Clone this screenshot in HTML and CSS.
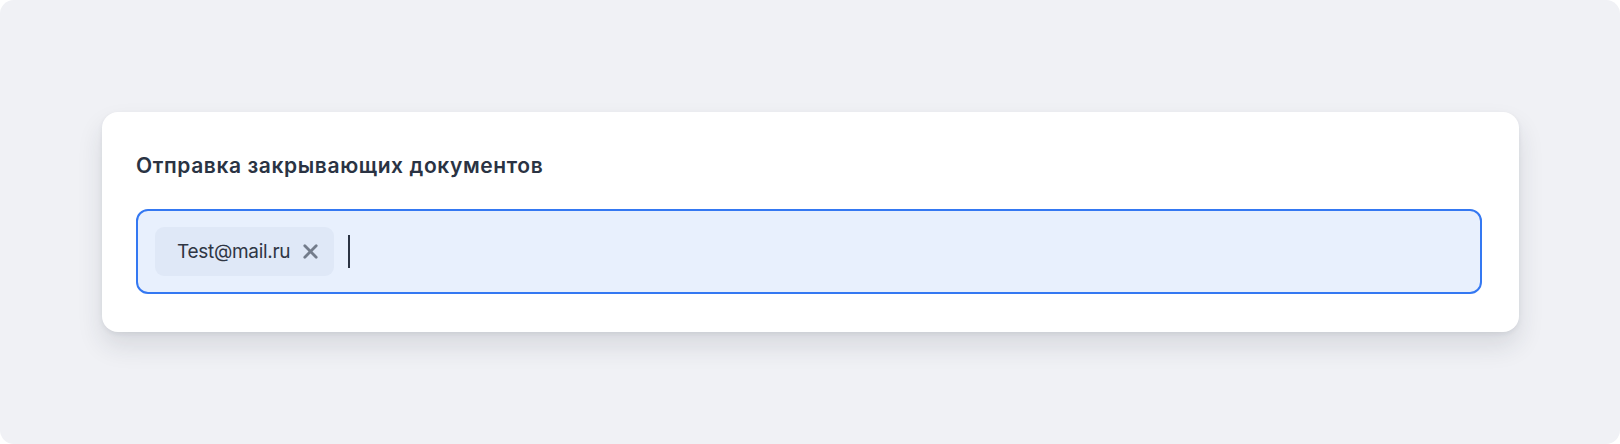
FILE: index.html
```html
<!DOCTYPE html>
<html lang="ru">
<head>
<meta charset="utf-8">
<title>Отправка закрывающих документов</title>
<link rel="stylesheet" href="styles.css">
</head>
<body>
<div class="frame">
  <section class="card">
    <h2 class="card-title">Отправка закрывающих документов</h2>
    <div class="tag-input">
      <span class="chip">
        <span class="chip-text">Test@mail.ru</span>
        <svg class="chip-x" width="15" height="15" viewBox="0 0 15 15" aria-hidden="true">
          <path d="M1.8 1.8 L13.2 13.2 M13.2 1.8 L1.8 13.2" stroke="currentColor" stroke-width="2.8" stroke-linecap="round" fill="none"/>
        </svg>
      </span>
      <span class="caret"></span>
    </div>
  </section>
</div>
</body>
</html>
```

FILE: styles.css
```css
* { box-sizing: border-box; }
html, body {
  margin: 0;
  padding: 0;
  background: #ffffff;
}
body {
  font-family: Inter, "Noto Sans", "Liberation Sans", sans-serif;
  width: 1620px;
  height: 444px;
}
.frame {
  width: 1620px;
  height: 444px;
  background: #f0f1f5;
  border-radius: 14px;
  padding: 112px 101px 112px 102px;
}
.card {
  background: #ffffff;
  border-radius: 16px;
  height: 220px;
  padding: 42px 37px 0 34px;
  box-shadow: 0 14px 26px rgba(30, 40, 60, 0.12), 0 2px 5px rgba(30, 40, 60, 0.07);
}
.card-title {
  margin: 0;
  font-size: 21px;
  line-height: 24px;
  font-weight: 600;
  color: #2a3343;
  letter-spacing: 0.6px;
}
.tag-input {
  margin-top: 31px;
  height: 85px;
  border: 2px solid #3478f2;
  border-radius: 12px;
  background: #e8f0fd;
  padding: 16px 17px;
  display: flex;
  align-items: center;
  gap: 14px;
}
.chip {
  height: 49px;
  display: inline-flex;
  align-items: center;
  gap: 13px;
  padding: 0 16px 0 22px;
  background: #dfe8f7;
  border-radius: 9px;
  font-size: 19px;
  letter-spacing: -0.3px;
  color: #2f3644;
}
.chip-x {
  color: #737c8b;
  display: block;
}
.caret {
  width: 2px;
  height: 33px;
  background: #2b3343;
}
```
